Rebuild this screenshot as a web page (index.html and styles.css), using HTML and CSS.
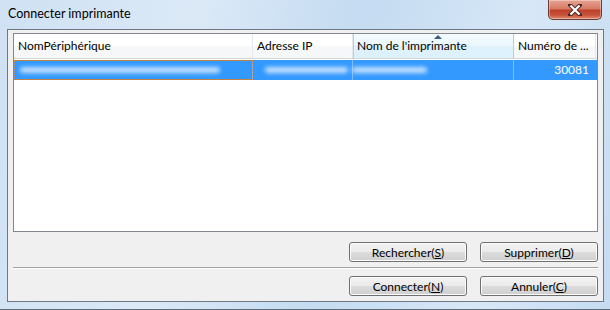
FILE: index.html
```html
<!DOCTYPE html>
<html lang="fr">
<head>
    <meta charset="UTF-8">
    <title>Connecter imprimante</title>
    <link rel="stylesheet" href="styles.css">
</head>
<body>
    <div class="window">
        <div class="titlebar">
            <span class="title">Connecter imprimante</span>
            <div class="close">
                <svg width="14" height="12" viewBox="0 0 14 12">
                    <path d="M2 1 L12 11 M12 1 L2 11" stroke="#4a2a24" stroke-width="4" stroke-linecap="square"/>
                    <path d="M2.5 1.5 L11.5 10.5 M11.5 1.5 L2.5 10.5" stroke="#fff" stroke-width="2.2"/>
                </svg>
            </div>
        </div>
        <div class="client">
            <div class="listview">
                <div class="header">
                    <div class="col c1">NomPériphérique</div>
                    <div class="col c2">Adresse IP</div>
                    <div class="col c3 sorted"><span class="arrow"></span>Nom de l'imprimante</div>
                    <div class="col c4">Numéro de ...</div>
                </div>
                <div class="row selected">
                    <div class="cell c1 focus"><span class="blur b1"></span></div>
                    <div class="cell c2"><span class="blur b2"></span></div>
                    <div class="cell c3"><span class="blur b3"></span></div>
                    <div class="cell c4 num">30081</div>
                </div>
            </div>
            <div class="buttons">
                <button class="btn">Rechercher(<u>S</u>)</button>
                <button class="btn">Supprimer(<u>D</u>)</button>
            </div>
            <div class="separator"></div>
            <div class="buttons">
                <button class="btn">Connecter(<u>N</u>)</button>
                <button class="btn">Annuler(<u>C</u>)</button>
            </div>
        </div>
    </div>
</body>
</html>
```

FILE: styles.css
```css
body {
    margin: 0;
    width: 610px;
    height: 310px;
    overflow: hidden;
    font-family: Lato, "Noto Sans", sans-serif;
    font-size: 12px;
}

.window {
    box-sizing: border-box;
    width: 610px;
    height: 310px;
    display: flex;
    flex-direction: column;
    background: linear-gradient(100deg, #cfe1f3 0%, #dbe9f7 30%, #c4dbf1 55%, #d7e7f7 80%, #c6dcf2 100%);
    border-bottom: 1px solid #5e6b78;
}

.titlebar {
    height: 29px;
    display: flex;
    align-items: flex-start;
    justify-content: space-between;
}
.title {
    margin: 6px 0 0 8px;
    color: #000;
    font-size: 12.5px;
}
.close {
    width: 54px;
    height: 20px;
    margin-right: 8px;
    box-sizing: border-box;
    border: 1px solid #6b3b35;
    border-top: none;
    border-radius: 0 0 5px 5px;
    background: linear-gradient(#e8a493 0%, #d67a66 45%, #c0402a 55%, #c8553d 80%, #e08a70 100%);
    box-shadow: inset 0 0 0 1px rgba(255,255,255,0.35);
    display: flex;
    align-items: center;
    justify-content: center;
}

.client {
    flex: 1;
    margin: 0 6px 7px 7px;
    border: 1px solid #6e7884;
    background: #f0f0f0;
    display: flex;
    flex-direction: column;
    padding: 3px 5px 0 5px;
}

.listview {
    height: 197px;
    border: 1px solid #828790;
    background: #fff;
}
.header {
    display: flex;
    height: 24px;
    background: linear-gradient(#ffffff 0%, #ffffff 50%, #f6f7f8 51%, #f6f7f8 100%);
    border-bottom: 1px solid #d5d5d5;
}
.col {
    box-sizing: border-box;
    padding-left: 4px;
    line-height: 24px;
    border-right: 1px solid #e3e8ee;
    white-space: nowrap;
    position: relative;
}
.c1 { width: 239px; }
.c2 { width: 100px; }
.c3 { width: 161px; }
.c4 { width: 82px; }
.sorted {
    background: linear-gradient(#f4fbfe 0%, #eaf7fd 50%, #dff2fb 51%, #dbf1fc 100%);
    border-left: 1px solid #96d9f9;
    border-right: 1px solid #96d9f9;
    padding-left: 3px;
}
.arrow {
    position: absolute;
    top: 1px;
    left: 80px;
    width: 0;
    height: 0;
    border-left: 4px solid transparent;
    border-right: 4px solid transparent;
    border-bottom: 4px solid #3c5d80;
}

.row {
    display: flex;
    height: 20px;
    margin-top: 1px;
}
.selected {
    background: #3399ff;
    color: #fff;
}
.cell {
    box-sizing: border-box;
    border-right: 1px solid #7cbcff;
    line-height: 20px;
    padding: 0 4px;
    display: flex;
    align-items: center;
}
.focus {
    outline: 1px dotted #c98a4b;
    outline-offset: -1px;
}
.num {
    justify-content: flex-end;
    padding-right: 7px;
    border-right: none;
}
.blur {
    display: block;
    height: 6px;
    border-radius: 3px;
    background: rgba(230,242,255,0.8);
    filter: blur(2px);
}
.b1 { width: 200px; margin-left: 2px; }
.b2 { width: 150px; margin-left: 8px; }
.b3 { width: 75px; margin-left: -5px; }

.buttons {
    display: flex;
    justify-content: flex-end;
    gap: 13px;
    margin-top: 10px;
}
.separator + .buttons {
    margin-top: 7px;
}
.btn {
    width: 118px;
    height: 20px;
    padding: 0;
    font-family: inherit;
    font-size: 12px;
    color: #000;
    border: 1px solid #707070;
    border-radius: 3px;
    background: linear-gradient(#f2f2f2 0%, #ebebeb 49%, #dddddd 50%, #cfcfcf 100%);
    box-shadow: inset 0 0 0 1px #fcfcfc;
}
.separator {
    margin-top: 5px;
    height: 1px;
    background: #a0a0a0;
    border-bottom: 1px solid #ffffff;
}
```
